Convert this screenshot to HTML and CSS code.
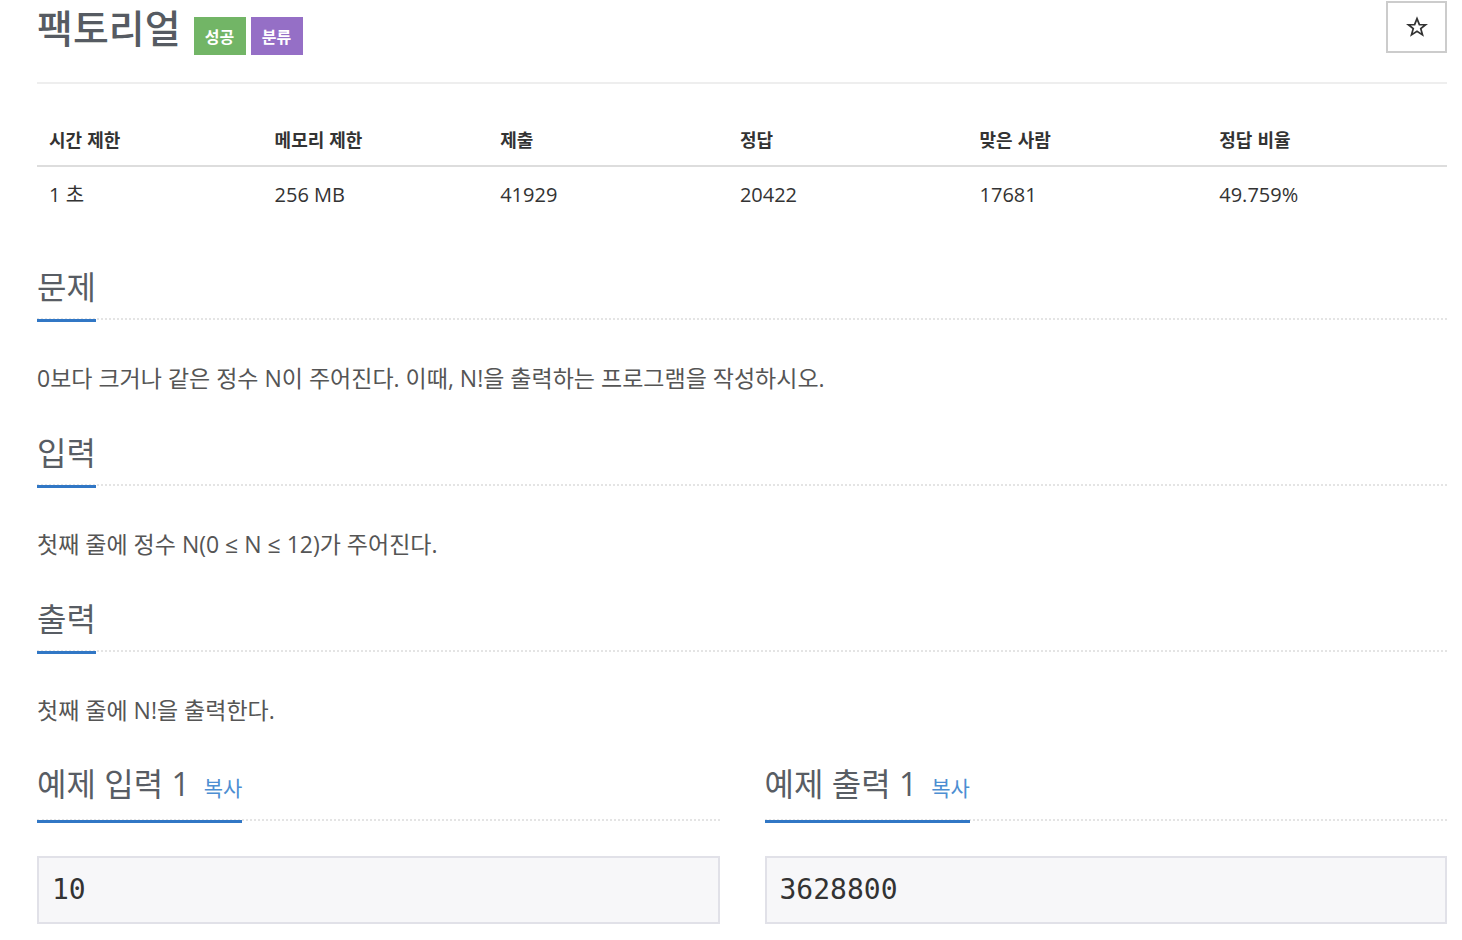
FILE: index.html
```html
<!DOCTYPE html>
<html lang="ko">
<head>
<meta charset="utf-8">
<title>팩토리얼</title>
<link rel="stylesheet" href="styles.css">
</head>
<body>
<div class="page">
  <div class="title-row">
    <h1 class="title">팩토리얼</h1>
    <span class="badge badge-green">성공</span>
    <span class="badge badge-purple">분류</span>
    <button class="star-btn" type="button" aria-label="즐겨찾기">
      <svg class="star-icon" viewBox="0 0 24 24" width="22" height="22"><path d="M12 2.8 L14.6 9.3 L21.4 9.5 L16.1 13.8 L18 20.6 L12 16.7 L6 20.6 L7.9 13.8 L2.6 9.5 L9.4 9.3 Z" fill="none" stroke="#333" stroke-width="1.9" stroke-linejoin="miter"/></svg>
    </button>
  </div>

  <table class="info">
    <thead>
      <tr>
        <th class="w16">시간 제한</th>
        <th class="w16">메모리 제한</th>
        <th class="w17">제출</th>
        <th class="w17">정답</th>
        <th class="w17">맞은 사람</th>
        <th class="w17">정답 비율</th>
      </tr>
    </thead>
    <tbody>
      <tr>
        <td>1 초</td>
        <td>256 MB</td>
        <td>41929</td>
        <td>20422</td>
        <td>17681</td>
        <td>49.759%</td>
      </tr>
    </tbody>
  </table>

  <section class="sec">
    <h2 class="headline"><span class="hl">문제</span></h2>
    <p class="text">0보다 크거나 같은 정수 N이 주어진다. 이때, N!을 출력하는 프로그램을 작성하시오.</p>
  </section>

  <section class="sec">
    <h2 class="headline"><span class="hl">입력</span></h2>
    <p class="text">첫째 줄에 정수 N(0 ≤ N ≤ 12)가 주어진다.</p>
  </section>

  <section class="sec">
    <h2 class="headline"><span class="hl">출력</span></h2>
    <p class="text">첫째 줄에 N!을 출력한다.</p>
  </section>

  <div class="samples">
    <div class="sample">
      <h2 class="headline"><span class="hl">예제 입력 1<a class="copy" href="#">복사</a></span></h2>
      <pre class="sample-box">10</pre>
    </div>
    <div class="sample">
      <h2 class="headline"><span class="hl">예제 출력 1<a class="copy" href="#">복사</a></span></h2>
      <pre class="sample-box">3628800</pre>
    </div>
  </div>
</div>
</body>
</html>
```

FILE: styles.css
```css
* { box-sizing: border-box; }

body {
  margin: 0;
  background: #fff;
  font-family: "Open Sans", "Noto Sans CJK KR", sans-serif;
  color: #333;
}

.page {
  padding: 0 15px 0 37px;
}

.title-row {
  display: flex;
  align-items: flex-start;
  height: 84px;
  border-bottom: 2px solid #eee;
}

.title {
  margin: 0;
  font-family: "Noto Sans CJK KR", sans-serif;
  font-size: 39px;
  line-height: 52px;
  font-weight: 500;
  color: #565b62;
}

.badge {
  margin-top: 17px;
  height: 38px;
  width: 52px;
  display: flex;
  align-items: center;
  justify-content: center;
  color: #fff;
  font-family: "Noto Sans CJK KR", sans-serif;
  font-size: 16px;
  font-weight: 700;
}

.badge-green {
  margin-left: 13px;
  background: #72b566;
}

.badge-purple {
  margin-left: 5px;
  background: #956fc6;
}

.star-btn {
  margin-left: auto;
  margin-top: 1px;
  width: 61px;
  height: 52px;
  border: 2px solid #ccc;
  background: #fff;
  padding: 0;
  display: flex;
  align-items: center;
  justify-content: center;
}

.star-icon {
  display: block;
}

.info {
  width: 100%;
  margin-top: 29px;
  border-collapse: collapse;
  table-layout: fixed;
}

.w16 { width: 16%; }
.w17 { width: 17%; }

.info th {
  text-align: left;
  font-family: "Noto Sans CJK KR", sans-serif;
  font-weight: 700;
  font-size: 18px;
  line-height: 24px;
  padding: 14px 12px;
  border-bottom: 2px solid #ddd;
  color: #333;
}

.info td {
  font-size: 20px;
  line-height: 24px;
  padding: 16px 12px;
  color: #333;
}

.sec {
  margin-top: 44px;
}

.sec + .sec {
  margin-top: 40px;
}

.headline {
  margin: 0;
  font-family: "Open Sans", "Noto Sans CJK KR", sans-serif;
  font-weight: 400;
  font-size: 32px;
  line-height: 40px;
  color: #585d64;
  border-bottom: 2px dotted #e4e4e4;
}

.hl {
  display: inline-block;
  padding-bottom: 12px;
  border-bottom: 3px solid #3177c5;
  margin-bottom: -4px;
}

.copy {
  margin-left: 14px;
  font-size: 21px;
  color: #4d8ed2;
  text-decoration: none;
}

.text {
  margin: 43px 0 0;
  font-size: 23px;
  line-height: 30px;
  color: #555;
}

.samples {
  margin-top: 39px;
  display: grid;
  grid-template-columns: 1fr 1fr;
  column-gap: 45px;
}

.sample-box {
  margin: 35px 0 0;
  padding: 15px 13px;
  background: #f7f7f9;
  border: 2px solid #e1e1e8;
  font-family: "DejaVu Sans Mono", monospace;
  font-size: 28px;
  line-height: 34px;
  color: #333;
}
```
